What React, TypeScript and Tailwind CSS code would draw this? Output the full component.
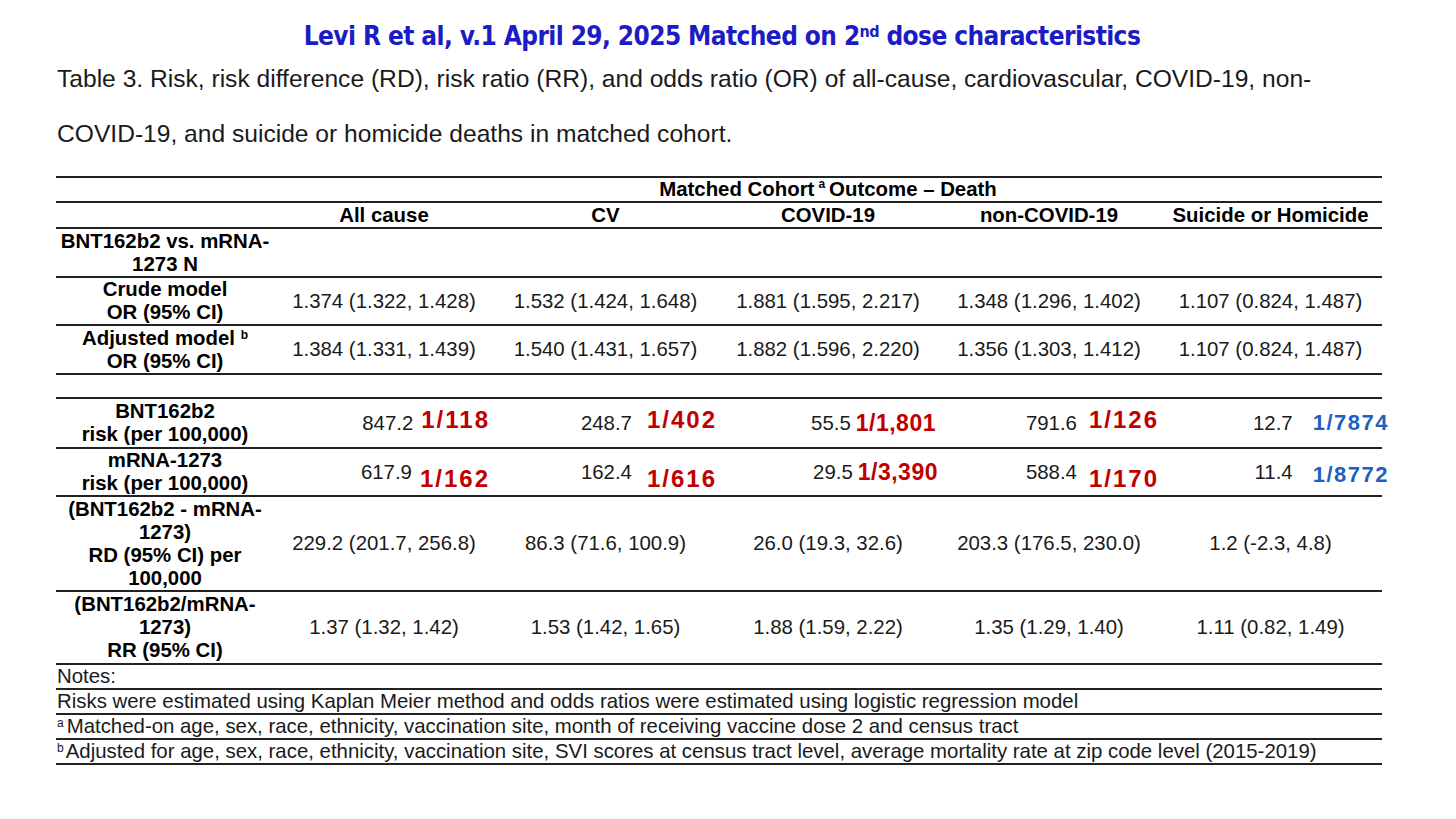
import React from "react";

const cols = "grid grid-cols-[218px_220px_223px_222px_220px_223px]";
const line = "border-b-2 border-[#222222]";

function Head({ children }: { children: React.ReactNode }) {
  return <div className="flex items-center justify-center text-center font-bold">{children}</div>;
}
function Cell({ children }: { children?: React.ReactNode }) {
  return <div className="flex items-center justify-center text-center text-[#1a1a1a]">{children}</div>;
}

export default function App() {
  return (
    <div className="w-[1456px] h-[819px] bg-white overflow-hidden font-['Liberation_Sans',Arial,sans-serif] text-black">
      <div className="pt-[20px] h-[52px] pr-[12px] text-center text-[26px] leading-[32px] font-bold text-[#1c1cc4] font-['DejaVu_Sans_Condensed','DejaVu_Sans',sans-serif] tracking-[-0.6px]">
        Levi R et al, v.1 April 29, 2025 Matched on 2<sup className="text-[16px]">nd</sup> dose characteristics
      </div>
      <div className="mt-[-1px] pl-[57px] text-[24.6px] leading-[55px] text-[#1a1a1a]">
        Table 3. Risk, risk difference (RD), risk ratio (RR), and odds ratio (OR) of all-cause, cardiovascular, COVID-19, non-
        <br />
        COVID-19, and suicide or homicide deaths in matched cohort.
      </div>
      <div className="mt-[15px] ml-[56px] w-[1326px] border-t-2 border-[#222222] text-[20.4px] leading-[23px]">
        {/* header row 1 */}
        <div className={`${cols} h-[25px] ${line}`}>
          <div />
          <div className="col-span-5 flex items-center justify-center font-bold">
            Matched Cohort <sup className="text-[12px] mx-[4px]">a</sup> Outcome – Death
          </div>
        </div>
        {/* header row 2 */}
        <div className={`${cols} h-[26px] ${line}`}>
          <div />
          <Head>All cause</Head>
          <Head>CV</Head>
          <Head>COVID-19</Head>
          <Head>non-COVID-19</Head>
          <Head>Suicide or Homicide</Head>
        </div>
        {/* N row */}
        <div className={`${cols} h-[49px] ${line}`}>
          <Head>
            BNT162b2 vs. mRNA-
            <br />
            1273 N
          </Head>
          <Cell />
          <Cell />
          <Cell />
          <Cell />
          <Cell />
        </div>
        {/* crude */}
        <div className={`${cols} h-[48px] ${line}`}>
          <Head>
            Crude model
            <br />
            OR (95% CI)
          </Head>
          <Cell>1.374 (1.322, 1.428)</Cell>
          <Cell>1.532 (1.424, 1.648)</Cell>
          <Cell>1.881 (1.595, 2.217)</Cell>
          <Cell>1.348 (1.296, 1.402)</Cell>
          <Cell>1.107 (0.824, 1.487)</Cell>
        </div>
        {/* adjusted */}
        <div className={`${cols} h-[49px] ${line}`}>
          <Head>
            <span>
              Adjusted model <sup className="text-[12px]">b</sup>
              <br />
              OR (95% CI)
            </span>
          </Head>
          <Cell>1.384 (1.331, 1.439)</Cell>
          <Cell>1.540 (1.431, 1.657)</Cell>
          <Cell>1.882 (1.596, 2.220)</Cell>
          <Cell>1.356 (1.303, 1.412)</Cell>
          <Cell>1.107 (0.824, 1.487)</Cell>
        </div>
        {/* empty */}
        <div className={`h-[24px] ${line}`} />
        {/* BNT risk */}
        <div className={`${cols} h-[50px] ${line}`}>
          <Head>
            BNT162b2
            <br />
            risk (per 100,000)
          </Head>
          <div className="flex items-center justify-end pr-[4px] text-[#1a1a1a]">
            <span>847.2</span>
            <span className="ml-[8px] mb-[8px] text-[24px] font-bold tracking-[2px] text-[#c00000]">1/118</span>
          </div>
          <div className="flex items-center justify-end pr-[0px] text-[#1a1a1a]">
            <span>248.7</span>
            <span className="ml-[15px] mb-[8px] text-[24px] font-bold tracking-[2px] text-[#c00000]">1/402</span>
          </div>
          <div className="flex items-center justify-end pr-[3px] text-[#1a1a1a]">
            <span>55.5</span>
            <span className="ml-[5px] text-[23px] font-bold tracking-[0.5px] text-[#c00000]">1/1,801</span>
          </div>
          <div className="flex items-center justify-end pr-[0px] text-[#1a1a1a]">
            <span>791.6</span>
            <span className="ml-[12px] mb-[8px] text-[24px] font-bold tracking-[2px] text-[#c00000]">1/126</span>
          </div>
          <div className="flex items-center justify-end mr-[-7px] text-[#1a1a1a]">
            <span>12.7</span>
            <span className="ml-[20px] mt-[-2px] text-[22px] font-bold tracking-[1.5px] text-[#1f5fbf]">1/7874</span>
          </div>
        </div>
        {/* mRNA risk */}
        <div className={`${cols} h-[48px] ${line}`}>
          <Head>
            mRNA-1273
            <br />
            risk (per 100,000)
          </Head>
          <div className="flex items-center justify-end pr-[4px] text-[#1a1a1a]">
            <span>617.9</span>
            <span className="ml-[8px] mt-[12px] text-[24px] font-bold tracking-[2px] text-[#c00000]">1/162</span>
          </div>
          <div className="flex items-center justify-end pr-[0px] text-[#1a1a1a]">
            <span>162.4</span>
            <span className="ml-[15px] mt-[12px] text-[24px] font-bold tracking-[2px] text-[#c00000]">1/616</span>
          </div>
          <div className="flex items-center justify-end pr-[1px] text-[#1a1a1a]">
            <span>29.5</span>
            <span className="ml-[5px] text-[23px] font-bold tracking-[0.5px] text-[#c00000]">1/3,390</span>
          </div>
          <div className="flex items-center justify-end pr-[0px] text-[#1a1a1a]">
            <span>588.4</span>
            <span className="ml-[12px] mt-[12px] text-[24px] font-bold tracking-[2px] text-[#c00000]">1/170</span>
          </div>
          <div className="flex items-center justify-end mr-[-7px] text-[#1a1a1a]">
            <span>11.4</span>
            <span className="ml-[20px] mt-[4px] text-[22px] font-bold tracking-[1.5px] text-[#1f5fbf]">1/8772</span>
          </div>
        </div>
        {/* RD */}
        <div className={`${cols} h-[95px] ${line}`}>
          <Head>
            (BNT162b2 - mRNA-
            <br />
            1273)
            <br />
            RD (95% CI) per
            <br />
            100,000
          </Head>
          <Cell>229.2 (201.7, 256.8)</Cell>
          <Cell>86.3 (71.6, 100.9)</Cell>
          <Cell>26.0 (19.3, 32.6)</Cell>
          <Cell>203.3 (176.5, 230.0)</Cell>
          <Cell>1.2 (-2.3, 4.8)</Cell>
        </div>
        {/* RR */}
        <div className={`${cols} h-[73px] ${line}`}>
          <Head>
            (BNT162b2/mRNA-
            <br />
            1273)
            <br />
            RR (95% CI)
          </Head>
          <Cell>1.37 (1.32, 1.42)</Cell>
          <Cell>1.53 (1.42, 1.65)</Cell>
          <Cell>1.88 (1.59, 2.22)</Cell>
          <Cell>1.35 (1.29, 1.40)</Cell>
          <Cell>1.11 (0.82, 1.49)</Cell>
        </div>
        {/* notes */}
        <div className={`h-[25px] ${line} flex items-center pl-[1px] text-[#1a1a1a]`}>Notes:</div>
        <div className={`h-[25px] ${line} flex items-center pl-[1px] text-[#1a1a1a]`}>
          Risks were estimated using Kaplan Meier method and odds ratios were estimated using logistic regression model
        </div>
        <div className={`h-[25px] ${line} flex items-center pl-[1px] text-[#1a1a1a]`}>
          <span>
            <sup className="text-[12px] mr-[3px]">a</sup>Matched-on age, sex, race, ethnicity, vaccination site, month of receiving vaccine dose 2 and census tract
          </span>
        </div>
        <div className={`h-[25px] ${line} flex items-center pl-[1px] text-[#1a1a1a]`}>
          <span>
            <sup className="text-[12px] mr-[2px]">b</sup>Adjusted for age, sex, race, ethnicity, vaccination site, SVI scores at census tract level, average mortality rate at zip code level (2015-2019)
          </span>
        </div>
      </div>
    </div>
  );
}
